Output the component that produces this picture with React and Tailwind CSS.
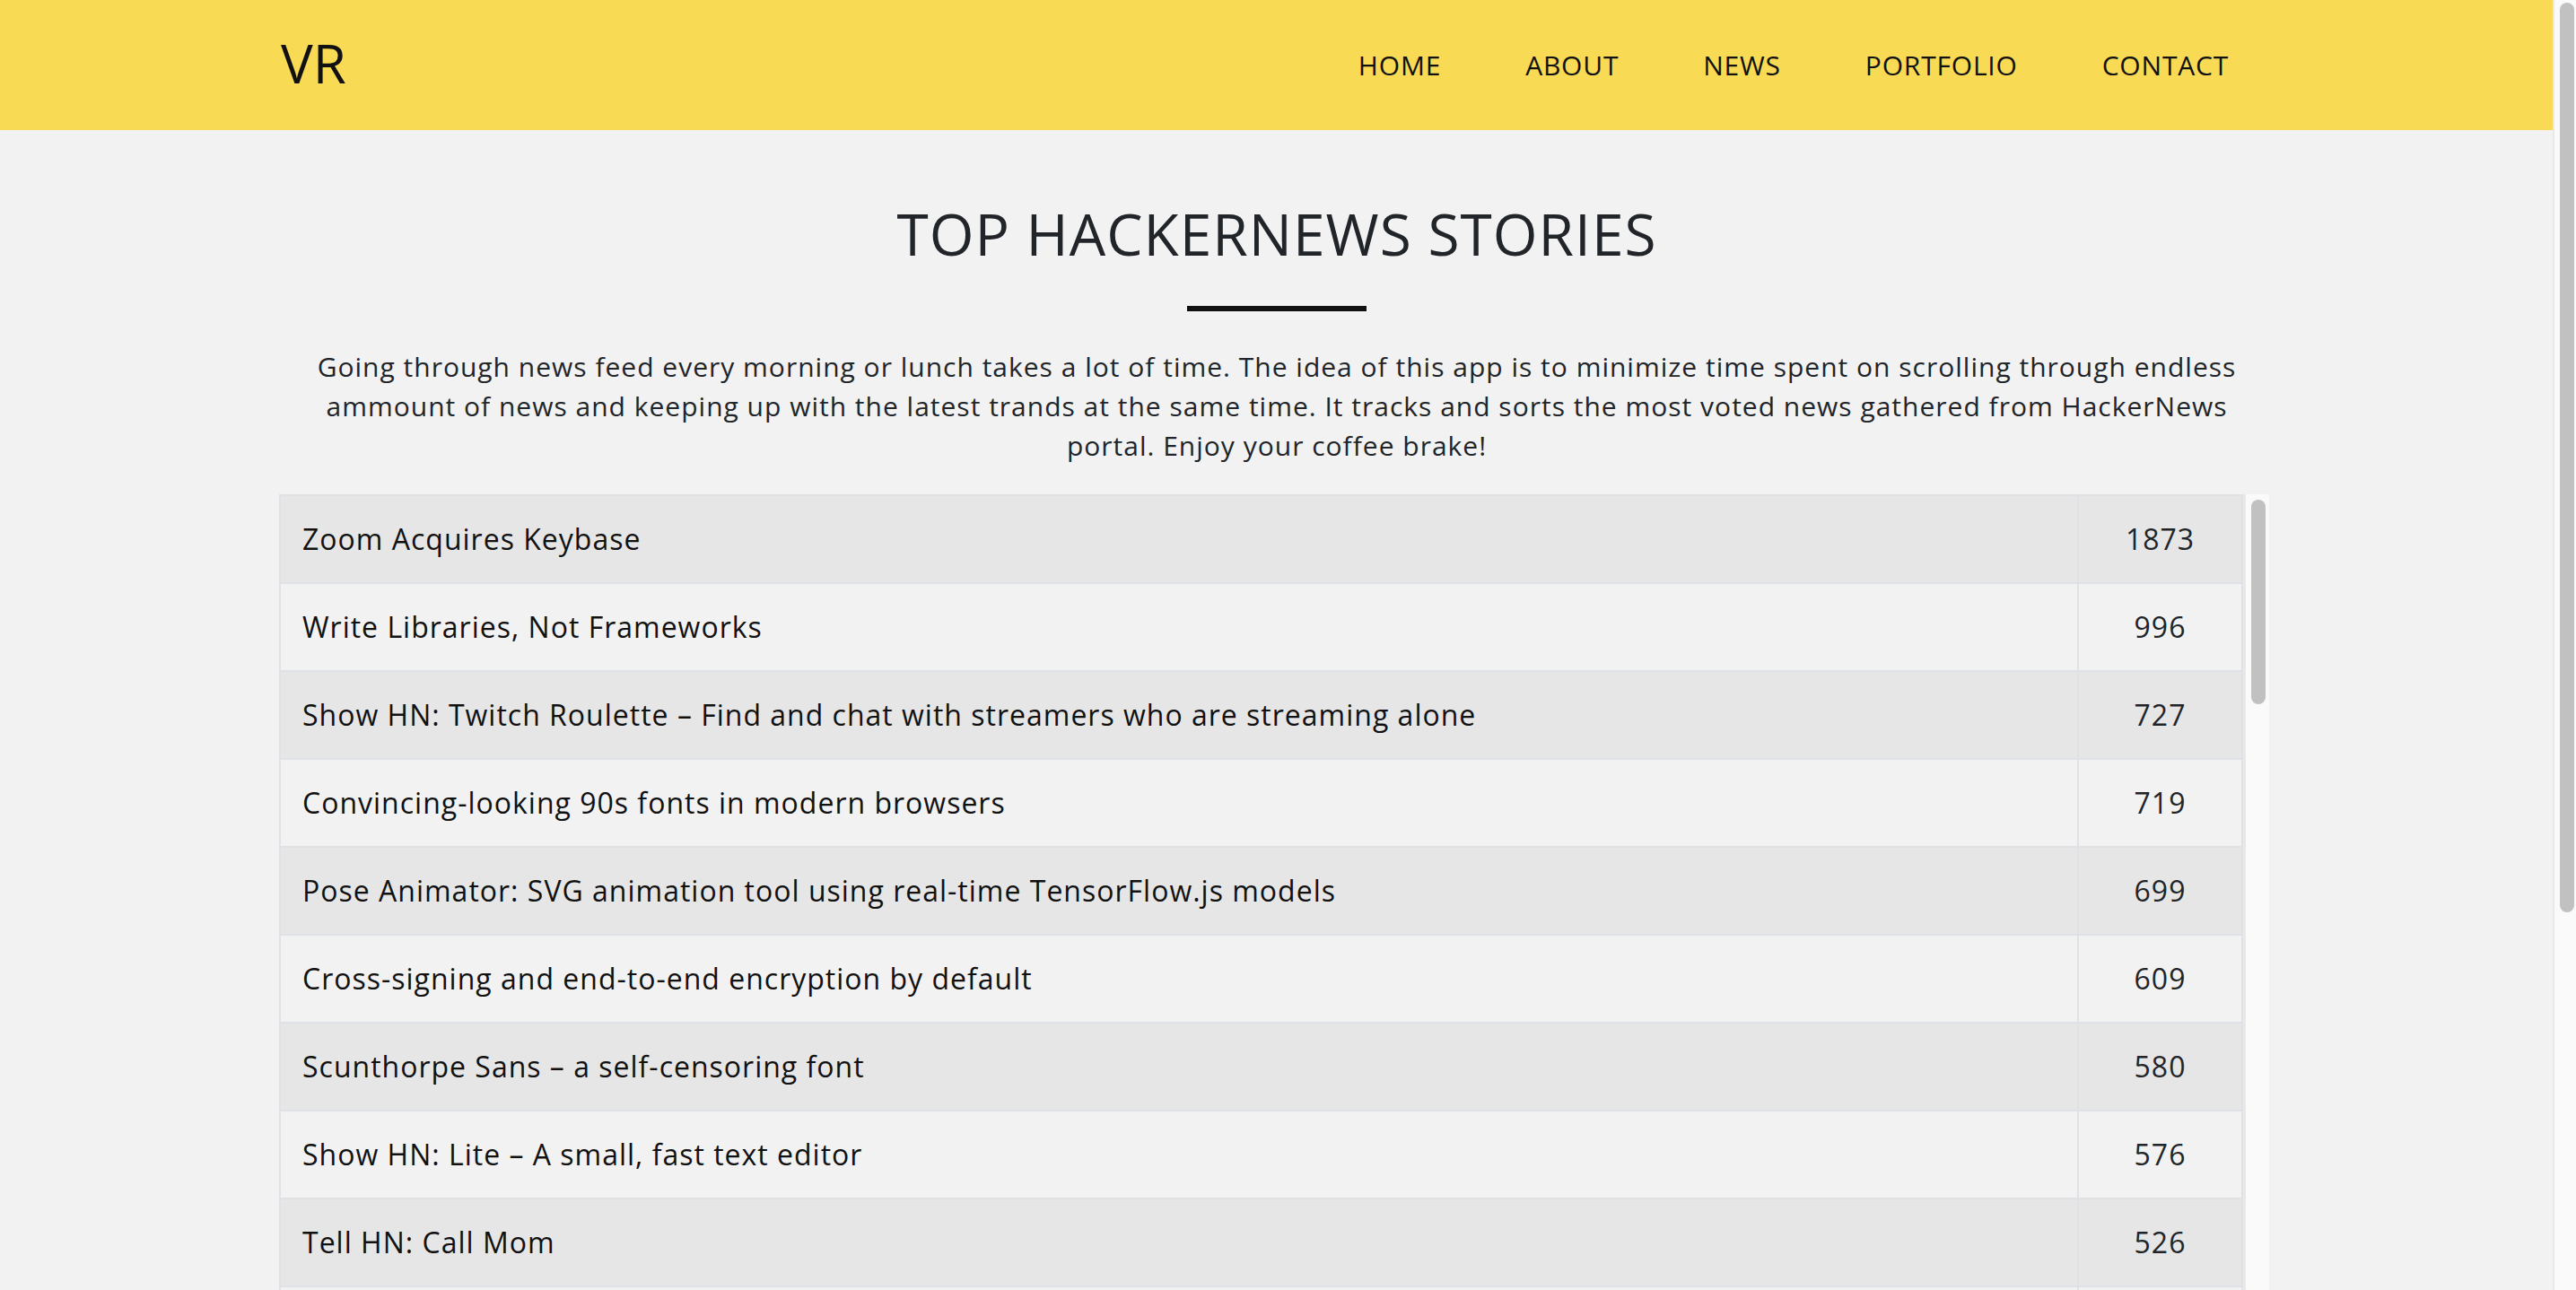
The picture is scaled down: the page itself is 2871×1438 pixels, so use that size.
import React from "react";

const stories = [
  { title: "Zoom Acquires Keybase", points: 1873 },
  { title: "Write Libraries, Not Frameworks", points: 996 },
  { title: "Show HN: Twitch Roulette – Find and chat with streamers who are streaming alone", points: 727 },
  { title: "Convincing-looking 90s fonts in modern browsers", points: 719 },
  { title: "Pose Animator: SVG animation tool using real-time TensorFlow.js models", points: 699 },
  { title: "Cross-signing and end-to-end encryption by default", points: 609 },
  { title: "Scunthorpe Sans – a self-censoring font", points: 580 },
  { title: "Show HN: Lite – A small, fast text editor", points: 576 },
  { title: "Tell HN: Call Mom", points: 526 },
  { title: "The Unreasonable Effectiveness of Plain Text", points: 498 },
];

const navLinks = ["HOME", "ABOUT", "NEWS", "PORTFOLIO", "CONTACT"];

// scrollbar look-alike (rail + thumb), the shot was taken with visible scrollbars
const Rail = ({ className, thumbClass }) => (
  <div className={`shrink-0 bg-[#fafafa] border-l-[#e8e8e8] ${className}`}>
    <div className={`w-[16px] rounded-full bg-[#c1c1c1] ${thumbClass}`} />
  </div>
);

const App = () => {
  return (
    <div className="flex h-screen overflow-hidden bg-[#f2f2f2] font-['Open_Sans',sans-serif] tracking-[1px] text-[#212529]">
      <div className="flex-1 min-w-0">
        <header className="h-[145px] bg-[#f9da55] flex items-center justify-between pl-[313px] pr-[312px]">
          <a className="text-[60px] leading-none text-[#111] pb-[6px] tracking-normal">VR</a>
          <nav className="flex items-center">
            {navLinks.map((link) => (
              <a key={link} className="px-[47px] last:pr-[49px] text-[30px] leading-none text-[#111] uppercase tracking-[0.8px]">
                {link}
              </a>
            ))}
          </nav>
        </header>

        <main className="pl-[313px] pr-[312px] pt-[78px]">
          <h1 className="text-center text-[64px] leading-[1.2] font-normal text-[#212529]">
            TOP HACKERNEWS STORIES
          </h1>
          <div className="mx-auto mt-[41px] w-[200px] h-[6px] bg-[#111]" />
          <p className="mt-[40px] px-[10px] text-center text-[30px] leading-[44px] text-[#212529]">
            Going through news feed every morning or lunch takes a lot of time. The idea of this app is to
            minimize time spent on scrolling through endless ammount of news and keeping up with the latest
            trands at the same time. It tracks and sorts the most voted news gathered from HackerNews portal.
            Enjoy your coffee brake!
          </p>

          <div className="mt-[32px] -ml-[2px] w-[2218px] h-[900px] flex">
            <div className="flex-1 min-w-0 overflow-hidden">
              <div className="border-x-2 border-b-2 border-[#dee2e6]">
                {stories.map((story, i) => (
                  <div
                    key={story.title}
                    className={`flex border-t-2 border-[#dee2e6] text-[32px] leading-[48px] ${
                      i % 2 === 0 ? "bg-[#e6e6e6]" : "bg-[#f2f2f2]"
                    }`}
                  >
                    <div className="flex-1 p-[24px] text-[#111] truncate">{story.title}</div>
                    <div className="w-[183px] p-[24px] border-l-2 border-[#dee2e6] text-center text-[#212529]">
                      {story.points}
                    </div>
                  </div>
                ))}
              </div>
            </div>
            <Rail className="w-[29px] border-l-[3px] pt-[6px] pl-[6px] pr-[4px]" thumbClass="h-[228px]" />
          </div>
        </main>
      </div>
      <Rail className="w-[26px] border-l-2 pt-[3px] pl-[6px] pr-[2px]" thumbClass="h-[1014px]" />
    </div>
  );
};

export default App;
